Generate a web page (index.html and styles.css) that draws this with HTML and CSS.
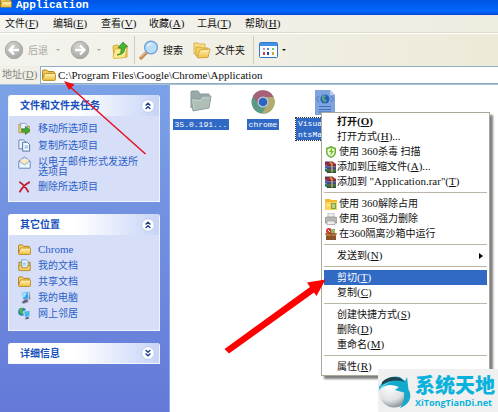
FILE: index.html
```html
<!DOCTYPE html>
<html lang="zh-CN">
<head>
    <meta charset="UTF-8">
    <meta name="viewport" content="width=device-width, initial-scale=1.0">
    <title>Application</title>
    <link rel="stylesheet" href="styles.css">
</head>
<body>
    <!-- shared icons -->
    <svg class="sprite" width="0" height="0">
        <defs>
            <linearGradient id="gold" x1="0" y1="0" x2="0" y2="1">
                <stop offset="0" stop-color="#fff6b8"/><stop offset="1" stop-color="#eebd3c"/>
            </linearGradient>
            <radialGradient id="gray" cx=".4" cy=".3" r=".8">
                <stop offset="0" stop-color="#d4d4d0"/><stop offset="1" stop-color="#a0a09c"/>
            </radialGradient>
            <symbol id="folder" viewBox="0 0 14 12">
                <path d="M.6 10V2Q.6 1 1.6 1h3l1.500 1.600h5.300q1 0 1 1V5" fill="#f3cf5d" stroke="#ad7c1d"/>
                <path d="M.6 10.300 2.400 5q.2-.6.9-.6h9.500q.8 0 .6.8v5.200q0 1-1 1H1.400q-.8 0-.8-1.100z" fill="url(#gold)" stroke="#b8841d" stroke-width=".9"/>
            </symbol>
            <symbol id="rar" viewBox="0 0 12 12">
                <path d="M0 1h8l3 2v2H2L0 4z" fill="#a52a45"/>
                <path d="M0 4l2 1.500h9V8H2L0 6.500z" fill="#3b55a8"/>
                <path d="M0 7l2 1.500h9v3H2L0 10z" fill="#2b7440"/>
                <path d="M2 5h9M2 8.200h9M0 1h8M2 11.500h9" stroke="#28222c" stroke-width=".8"/>
                <path d="M5 1l2 2v8.500" fill="none" stroke="#c8964b" stroke-width="1.800"/>
            </symbol>
            <symbol id="chevrons" viewBox="0 0 14 14">
                <circle cx="7" cy="7" r="6.300" fill="#fff" stroke="#b5c3e5" stroke-width=".8"/>
                <path d="M4.600 6.500 7 4.200l2.400 2.300M4.600 10 7 7.700 9.400 10" fill="none" stroke="#1c408f" stroke-width="1.300"/>
            </symbol>
        </defs>
    </svg>

    <div class="window">
        <header class="titlebar">
            <svg class="title-icon" viewBox="0 3 14 9"><use href="#folder" width="14" height="12"/></svg>
            <h1>Application</h1>
        </header>

        <nav class="menubar">
            <button>文件<span class="en">(<u>F</u>)</span></button>
            <button>编辑<span class="en">(<u>E</u>)</span></button>
            <button>查看<span class="en">(<u>V</u>)</span></button>
            <button>收藏<span class="en">(<u>A</u>)</span></button>
            <button>工具<span class="en">(<u>T</u>)</span></button>
            <button>帮助<span class="en">(<u>H</u>)</span></button>
        </nav>

        <div class="toolbar">
            <button class="tool tool-back" disabled>
                <svg width="20" height="20" viewBox="0 0 20 20"><circle cx="10" cy="10" r="8.700" fill="url(#gray)" stroke="#aaa9a3"/><path d="M10 5.500 5.500 10l4.500 4.500M6 10h9" fill="none" stroke="#fff" stroke-width="2.300"/></svg>
                后退
                <i class="caret"></i>
            </button>
            <button class="tool tool-forward" aria-label="前进" disabled>
                <svg width="20" height="20" viewBox="0 0 20 20"><circle cx="10" cy="10" r="8.700" fill="url(#gray)" stroke="#aaa9a3"/><path d="m10 5.500 4.500 4.500-4.500 4.500M14 10H5" fill="none" stroke="#fff" stroke-width="2.300"/></svg>
                <i class="caret"></i>
            </button>
            <button class="tool tool-up" aria-label="向上">
                <svg width="16" height="18" viewBox="0 0 16 18"><path d="M1 5l4-1 2 1 8-1v12l-13 1z" fill="#f3d155" stroke="#c79a28" stroke-width=".8"/><path d="m1 16 2-8 12-1-2 9.500-11 1z" fill="#ffeb8e" stroke="#d2aa35" stroke-width=".7"/><path d="M5 14q5-1 4-7H6l5-6 4.500 5H13q0 8-8 8z" fill="#42b838" stroke="#24821e" stroke-width=".7"/></svg>
            </button>
            <span class="divider"></span>
            <button class="tool tool-search">
                <svg width="20" height="20" viewBox="0 0 20 20"><path d="m8 12-6 6" stroke="#c98c58" stroke-width="3.200" stroke-linecap="round"/><path d="m7 12-5 5" stroke="#f1c79c" stroke-width="1"/><circle cx="12" cy="7.500" r="6.400" fill="#b9defa" stroke="#6b9ed8" stroke-width="1.300"/><path d="M8 6q2-4 6-2-4 0-6 3z" fill="#fff"/></svg>
                搜索
            </button>
            <button class="tool tool-folders">
                <svg width="18" height="17" viewBox="0 0 18 17"><path d="M1 12V1h4l1 1h6v10z" fill="#f9df80" stroke="#d3a640" stroke-width=".8"/><path d="M3 14V5h5l1 1h6v9z" fill="#f5cf60" stroke="#cba03b" stroke-width=".8"/><path d="m4 15 3-7 10-1-2 8.500-10 .5z" fill="url(#gold)" stroke="#c79c38" stroke-width=".8"/></svg>
                文件夹
            </button>
            <span class="divider"></span>
            <button class="tool tool-view" aria-label="查看方式">
                <svg width="19" height="16" viewBox="0 0 19 16"><rect x=".5" y=".5" width="18" height="15" rx="1" fill="#f9fbff" stroke="#2f79c8"/><path d="M1 1h17v3H1z" fill="#4592e5"/><path d="M4 6h2v2H4z" fill="#b39bd5"/><path d="M8 6h2v2H8z" fill="#5988dd"/><path d="M13 6h2v2h-2z" fill="#77bf75"/><path d="M4 10h2v3H4z" fill="#d7413d"/><path d="M8 10h2v3H8z" fill="#2146aa"/><path d="M13 10h2v3h-2z" fill="#d7a42e"/></svg>
                <i class="caret"></i>
            </button>
        </div>

        <div class="address">
            <label for="path">地址<span class="en">(<u>D</u>)</span></label>
            <div class="address-box">
                <svg width="14" height="12"><use href="#folder"/></svg>
                <input id="path" type="text" value="C:\Program Files\Google\Chrome\Application">
            </div>
        </div>

        <div class="content">
            <aside class="sidebar">
                <section class="panel">
                    <header>
                        <h2>文件和文件夹任务</h2>
                        <button aria-label="折叠"><svg width="14" height="14"><use href="#chevrons"/></svg></button>
                    </header>
                    <ul>
                        <li>
                            <svg viewBox="0 0 14 13"><path d="M1 11V2h4l1 2h6v7z" fill="#f6d877" stroke="#a18131" stroke-width=".8"/><path d="M3 1h5l2 2v4H3z" fill="#eef5ff" stroke="#718bb2" stroke-width=".7"/><path d="M4 7h4V4l5 4.500L8 13v-3H4z" fill="#43ad32" stroke="#217219" stroke-width=".7"/></svg>
                            <a href="#">移动所选项目</a>
                        </li>
                        <li>
                            <svg viewBox="0 0 14 13"><path d="M1 .5h5l2 2V10H1z" fill="#eaf4ff" stroke="#486f9d" stroke-width=".8"/><path d="M5 3h5l2.500 2.500v7H5z" fill="#f8fcff" stroke="#345f92" stroke-width=".9"/><path d="M7 7h4M7 9h4" stroke="#6caad9"/></svg>
                            <a href="#">复制所选项目</a>
                        </li>
                        <li class="two-lines">
                            <svg viewBox="0 0 14 13"><path d="m1 5 6-4.500L13 5v7.500H1z" fill="#d4e5ff" stroke="#5c7eaf" stroke-width=".9"/><path d="M3 3h8v5H3z" fill="#ffe7bc"/><path d="m1 5 6 4 6-4v7.500H1z" fill="#edf6ff" stroke="#6f92c1" stroke-width=".8"/></svg>
                            <a href="#">以电子邮件形式发送所选项目</a>
                        </li>
                        <li>
                            <svg viewBox="0 0 14 13"><path d="M2 2q5 3 9 10M12 2Q6 5 2 12" fill="none" stroke="#c31f32" stroke-width="2" stroke-linecap="round"/></svg>
                            <a href="#">删除所选项目</a>
                        </li>
                    </ul>
                </section>

                <section class="panel">
                    <header>
                        <h2>其它位置</h2>
                        <button aria-label="折叠"><svg width="14" height="14"><use href="#chevrons"/></svg></button>
                    </header>
                    <ul class="places">
                        <li>
                            <svg viewBox="0 0 14 12"><use href="#folder"/></svg>
                            <a href="#" class="en">Chrome</a>
                        </li>
                        <li>
                            <svg viewBox="0 0 14 13"><path d="M1 11V3h12v8z" fill="#efc452" stroke="#a57a1c"/><path d="M4 .5h5l2 2V9H4z" fill="#eff8ff" stroke="#5a91c2" stroke-width=".8"/><path d="M5 4h4M5 6h4" stroke="#69b2e3"/><path d="M1 7h3v2h6V7h3v5H1z" fill="url(#gold)" stroke="#b4821e" stroke-width=".8"/></svg>
                            <a href="#">我的文档</a>
                        </li>
                        <li>
                            <svg viewBox="0 0 14 12"><use href="#folder"/></svg>
                            <a href="#">共享文档</a>
                        </li>
                        <li>
                            <svg viewBox="0 0 14 13"><path d="m4 1 7-1 1 8-7 1z" fill="#39a5ec" stroke="#d1e2f5"/><path d="m5 2 5-1-3 5-2 1z" fill="#a2e2ff"/><path d="m12 0 1 8-1 1M7 9l3-1 1 3-5 2-2-1z" fill="#656178" stroke="#938ba6" stroke-width=".6"/></svg>
                            <a href="#">我的电脑</a>
                        </li>
                        <li>
                            <svg viewBox="0 0 14 13"><circle cx="4.500" cy="4.500" r="4.300" fill="#257bbd"/><path d="M1 3q3-4 5-2L4 4l3 1-3 3-2-3z" fill="#52b746"/><path d="m6 4 7-1v7l-6 1z" fill="#4eb6ef" stroke="#dce9f7"/><path d="m8 11 3-1 1 2-4 1z" fill="#615878"/></svg>
                            <a href="#">网上邻居</a>
                        </li>
                    </ul>
                </section>

                <section class="panel closed">
                    <header>
                        <h2>详细信息</h2>
                        <button aria-label="展开"><svg class="flip" width="14" height="14"><use href="#chevrons"/></svg></button>
                    </header>
                </section>
            </aside>

            <main class="files">
                <figure class="file">
                    <svg width="22" height="22" viewBox="0 0 22 22"><path d="M1 18V2q0-1 1-1h6l2 3h9v4" fill="#97aaa5" stroke="#8798a0"/><path d="M3 21 1 8l9 1 2-3h9l-2 12z" fill="#afbfb6" stroke="#8ba0a7"/><path d="m4 19-1-9 7 1 3-3h6" fill="none" stroke="#c3d0c6"/></svg>
                    <figcaption>35.0.191...</figcaption>
                </figure>
                <figure class="file">
                    <svg width="24" height="24" viewBox="0 0 24 24"><circle cx="12" cy="12" r="11.500" fill="#5b9984"/><path d="M2 6.300A11.500 11.500 0 0 1 22.500 7H12a5 5 0 0 0-4.500 7.500z" fill="#a85f79"/><path d="M22.500 7A11.500 11.500 0 0 1 11 23.500l5.500-9.200A5 5 0 0 0 12 7z" fill="#b2ab70"/><circle cx="12" cy="12" r="5.500" fill="#bdcce0"/><circle cx="12" cy="12" r="4.300" fill="#2b65bd"/></svg>
                    <figcaption>chrome</figcaption>
                </figure>
                <figure class="file focused">
                    <svg width="22" height="25" viewBox="0 0 22 25"><path d="M1 0h15l5 5v20H1z" fill="#7ea3df"/><path d="M16 0v5h5z" fill="#b4ccf0"/><circle cx="11" cy="9" r="4.500" fill="#2261b3"/><path d="M8 6q3-2 4 0l-2 3 3 1-2 3-3-3z" fill="#58a18b"/><path d="M5 6 2.500 9 5 12M17 6l2.500 3-2.500 3" fill="none" stroke="#4d77bd"/><path d="M5 16.500h12M5 19.500h12M5 22h12" stroke="#416fb9"/></svg>
                    <figcaption>VisualElementsManifest</figcaption>
                </figure>
            </main>
        </div>
    </div>

    <div class="context-menu">
        <button class="bold">打开<span class="en">(<u>O</u>)</span></button>
        <button>打开方式<span class="en">(<u>H</u>)...</span></button>
        <button class="near"><svg viewBox="0 0 12 12"><path d="m6 0 5 2v4q0 4-5 6-5-2-5-6V2z" fill="#6aae2d"/><path d="m6 2 3.500 1v3q0 3-3.500 4.500Q2.500 9 2.500 6V3z" fill="#f1ffe1"/><path d="M7 2 4 6h2l-1 4 4-5H7z" fill="#75bd27"/></svg>使用 <span class="en">360</span>杀毒 扫描</button>
        <button><svg viewBox="0 0 12 12"><use href="#rar"/></svg>添加到压缩文件<span class="en">(<u>A</u>)...</span></button>
        <button><svg viewBox="0 0 12 12"><use href="#rar"/></svg>添加到 <span class="en">"Application.rar"(<u>T</u>)</span></button>
        <hr>
        <button class="near"><svg viewBox="0 0 12 12"><path d="M0 1h5l1 1h6v10H0z" fill="#f3b630"/><path d="M0 4h12v8H0z" fill="#ffd45c"/><path d="M6 5h5v6H6z" fill="#77a83c"/><path d="M7 7h3M7 9h3M2 7h3" stroke="#fff7cc"/></svg>使用 <span class="en">360</span>解除占用</button>
        <button class="near"><svg viewBox="0 0 12 12"><path d="M3 0h6v5H3z" fill="#eee" stroke="#aaa" stroke-width=".7"/><path d="m0 5 2-1h8l2 1v5H0z" fill="#b8b8b4" stroke="#888985" stroke-width=".7"/><path d="M2 8h8v3.500H2z" fill="#eee" stroke="#999" stroke-width=".7"/></svg>使用 <span class="en">360</span>强力删除</button>
        <button class="near"><svg viewBox="0 0 12 12"><circle cx="4" cy="3" r="3" fill="#d93834"/><path d="M6 1h4v5H6z" fill="#92b566"/><path d="M1 5h10v7H1z" fill="#8a542b"/><path d="m0 5 5 1 1 2 1-2 5-1-1 3H1z" fill="#b5763f"/><path d="m3 2 2 2" stroke="#fff"/></svg>在<span class="en">360</span>隔离沙箱中运行</button>
        <hr>
        <button class="has-sub">发送到<span class="en">(<u>N</u>)</span></button>
        <hr>
        <button class="active">剪切<span class="en">(<u>T</u>)</span></button>
        <button>复制<span class="en">(<u>C</u>)</span></button>
        <hr>
        <button>创建快捷方式<span class="en">(<u>S</u>)</span></button>
        <button>删除<span class="en">(<u>D</u>)</span></button>
        <button>重命名<span class="en">(<u>M</u>)</span></button>
        <hr>
        <button>属性<span class="en">(<u>R</u>)</span></button>
    </div>

    <!-- red pointers -->
    <svg class="arrows" width="498" height="412" viewBox="0 0 498 412">
        <path d="m68 85 77.500 69" stroke="#e8101c" stroke-width="1.500"/>
        <path d="m64 81 10.500 3.500-5.500 5.500z" fill="#f00e14"/>
        <path d="M224.500 349 310 287l-3-4.500 18.500-3-9 16.500-2.500-3.500-85 61z" fill="#fe0000"/>
    </svg>

    <div class="watermark">
        <svg width="36" height="36" viewBox="0 0 36 36">
            <defs>
                <radialGradient id="ball" cx=".35" cy=".25" r=".85">
                    <stop offset="0" stop-color="#fff"/><stop offset=".6" stop-color="#dfe3e5"/><stop offset="1" stop-color="#727b80"/>
                </radialGradient>
            </defs>
            <circle cx="16" cy="20" r="14.500" fill="url(#ball)"/>
            <path d="M1 14Q8 1 22 4l5 4 2-4 2 17-14-4 4-3Q9 9 1 17z" fill="#12a9cd"/>
            <path d="M4 9q8-7 18-4l5 4Q14 5 4 12z" fill="#23434d"/>
            <path d="M31 17q5 12-9 18 5-8 4-15z" fill="#16a8ca"/>
            <path d="M1 16q4-6 13-7-8 2-13 9z" fill="#70dceb"/>
        </svg>
        <div>
            <strong>系统天地</strong>
            <span>XiTongTianDi.net</span>
        </div>
    </div>
</body>
</html>
```
FILE: styles.css
```css
* {
    box-sizing: border-box;
}
body {
    margin: 0;
    font-family: "Liberation Serif", "Noto Sans CJK SC", serif;
    font-size: 10px;
    line-height: 15px;
    color: #111;
    background: #fff;
    overflow: hidden;
}
button {
    display: flex;
    align-items: center;
    padding: 0;
    border: none;
    background: none;
    font: inherit;
    color: inherit;
    white-space: nowrap;
}
svg {
    display: block;
    flex: none;
}
.sprite,
.arrows {
    position: absolute;
    top: 0;
    left: 0;
    pointer-events: none;
}
.en {
    font-size: 11px;
}
.window {
    display: flex;
    flex-direction: column;
    min-height: 100vh;
}

/* title bar */
.titlebar {
    display: flex;
    align-items: flex-start;
    gap: 4px;
    height: 15px;
    background: linear-gradient(#0053e1, #0068ff 75%, #0046d5);
}
.titlebar h1 {
    margin: 0;
    font: bold 11px/10px "Liberation Mono", monospace;
    color: #fff;
}
.title-icon {
    width: 12px;
    height: 8px;
}

/* menu and tool bars */
.menubar {
    display: flex;
    height: 18px;
    padding-left: 5px;
    background: linear-gradient(90deg, #f4f4f1, #eeecdf);
    border-bottom: 1px solid #dfdccb;
}
.menubar button {
    width: 48px;
}
.toolbar {
    display: flex;
    align-items: center;
    height: 33px;
    padding-left: 4px;
    background: linear-gradient(90deg, #f4f4ef, #edead9);
    border-top: 1px solid #fff;
}
.tool {
    gap: 4px;
}
.tool:disabled {
    color: #aaa99e;
}
.caret {
    border: 2px solid transparent;
    border-top-color: currentColor;
    border-bottom: none;
}
.tool-back .caret {
    margin-left: 4px;
}
.tool-forward {
    gap: 7px;
    margin-left: 10px;
}
.tool-up {
    margin: 0 6px 0 11px;
}
.divider {
    height: 28px;
    border-left: 1px solid #cfccba;
}
.tool-search {
    margin: 0 10px 0 4px;
}
.tool-folders {
    margin-right: 8px;
}
.tool-view {
    margin-left: 5px;
}

/* address */
.address {
    display: flex;
    align-items: stretch;
    height: 19px;
    background: #f1f0e8;
    border-bottom: 1px solid #a9c0d5;
}
.address label {
    width: 40px;
    padding: 1px 0 0 2px;
    color: #85847c;
}
.address-box {
    display: flex;
    flex: 1;
    align-items: center;
    gap: 2px;
    padding-left: 1px;
    border: 1px solid #8fadc4;
    border-right: none;
    background: #fff;
}
.address-box input {
    flex: 1;
    min-width: 0;
    padding: 0;
    border: none;
    outline: none;
    font: 11px/15px "Liberation Serif", serif;
    color: #111;
}

/* side panels */
.content {
    display: flex;
    flex: 1;
}
.sidebar {
    width: 170px;
    padding: 10px 9px 0 8px;
    border-right: 1px solid #8fa8ea;
    background: linear-gradient(#7ba2e7, #6479d8);
}
.panel {
    margin-bottom: 12px;
    border: 1px solid #f1f5ff;
    border-top: none;
    border-radius: 3px 3px 0 0;
    background: #d6dff7;
}
.panel header {
    display: flex;
    align-items: center;
    justify-content: space-between;
    height: 21px;
    padding: 0 4px 0 11px;
    border-radius: 3px 3px 0 0;
    background: linear-gradient(90deg, #fff 45%, #c7d4f7);
}
.panel h2 {
    margin: 0;
    font-size: 10px;
    color: #164fbd;
}
.closed header {
    height: 20px;
}
.flip {
    transform: rotate(180deg);
}
.panel ul {
    margin: 0;
    padding: 4px 16px 6px 9px;
    list-style: none;
}
.panel li {
    display: flex;
    gap: 7px;
    padding: 1px 0;
}
.panel li svg {
    width: 13px;
    height: 13px;
    margin-top: 1px;
}
.panel a {
    color: #2b60c8;
    text-decoration: none;
}
.panel .two-lines a {
    line-height: 10px;
    padding-top: 2px;
}
.panel .places {
    padding: 6px 16px 9px 9px;
}
.places li {
    height: 16px;
}

/* files */
.files {
    display: flex;
    flex: 1;
    align-items: flex-start;
    padding-top: 5px;
    background: #fff;
}
.file {
    display: flex;
    flex: none;
    flex-direction: column;
    align-items: center;
    justify-content: space-between;
    width: 62px;
    height: 40px;
    margin: 0;
}
.file figcaption {
    max-width: 58px;
    padding: 0 2px;
    background: #316ac5;
    color: #fff;
    font: 8px/11px "Liberation Mono", monospace;
}
.focused {
    height: 50px;
}
.focused figcaption {
    width: 58px;
    height: 22px;
    overflow: hidden;
    outline: 1px dotted #334;
    word-break: break-all;
}

/* right-click menu */
.context-menu {
    position: absolute;
    top: 112px;
    left: 321px;
    width: 169px;
    padding: 1px 2px;
    border: 1px solid #aca899;
    background: #fff;
    box-shadow: 3px 3px 2px rgba(0, 0, 0, 0.5);
}
.context-menu button {
    position: relative;
    width: 100%;
    height: 15px;
    padding-left: 13px;
    white-space: pre;
}
.context-menu .near {
    padding-left: 15px;
}
.context-menu svg {
    position: absolute;
    left: 1px;
    top: 2px;
    width: 12px;
    height: 12px;
}
.context-menu hr {
    margin: 3px 0;
    border: none;
    border-top: 1px solid #b9b6a8;
}
.context-menu .bold {
    font-weight: bold;
}
.context-menu .active {
    background: #316ac5;
    color: #fff;
}
.has-sub::after {
    content: "";
    margin: 0 4px 0 auto;
    border: 3px solid transparent;
    border-left: 4px solid #000;
    border-right: none;
}

/* site mark */
.watermark {
    position: absolute;
    right: 0;
    bottom: 0;
    display: flex;
    align-items: center;
    gap: 1px;
    width: 120px;
    height: 43px;
    background: #f0f0f0;
    color: #08b2dc;
}
.watermark strong,
.watermark span {
    display: block;
    white-space: nowrap;
}
.watermark strong {
    font: 900 20px/24px "Noto Sans CJK SC", sans-serif;
}
.watermark span {
    font: bold 9px/12px "Open Sans", sans-serif;
}
```
